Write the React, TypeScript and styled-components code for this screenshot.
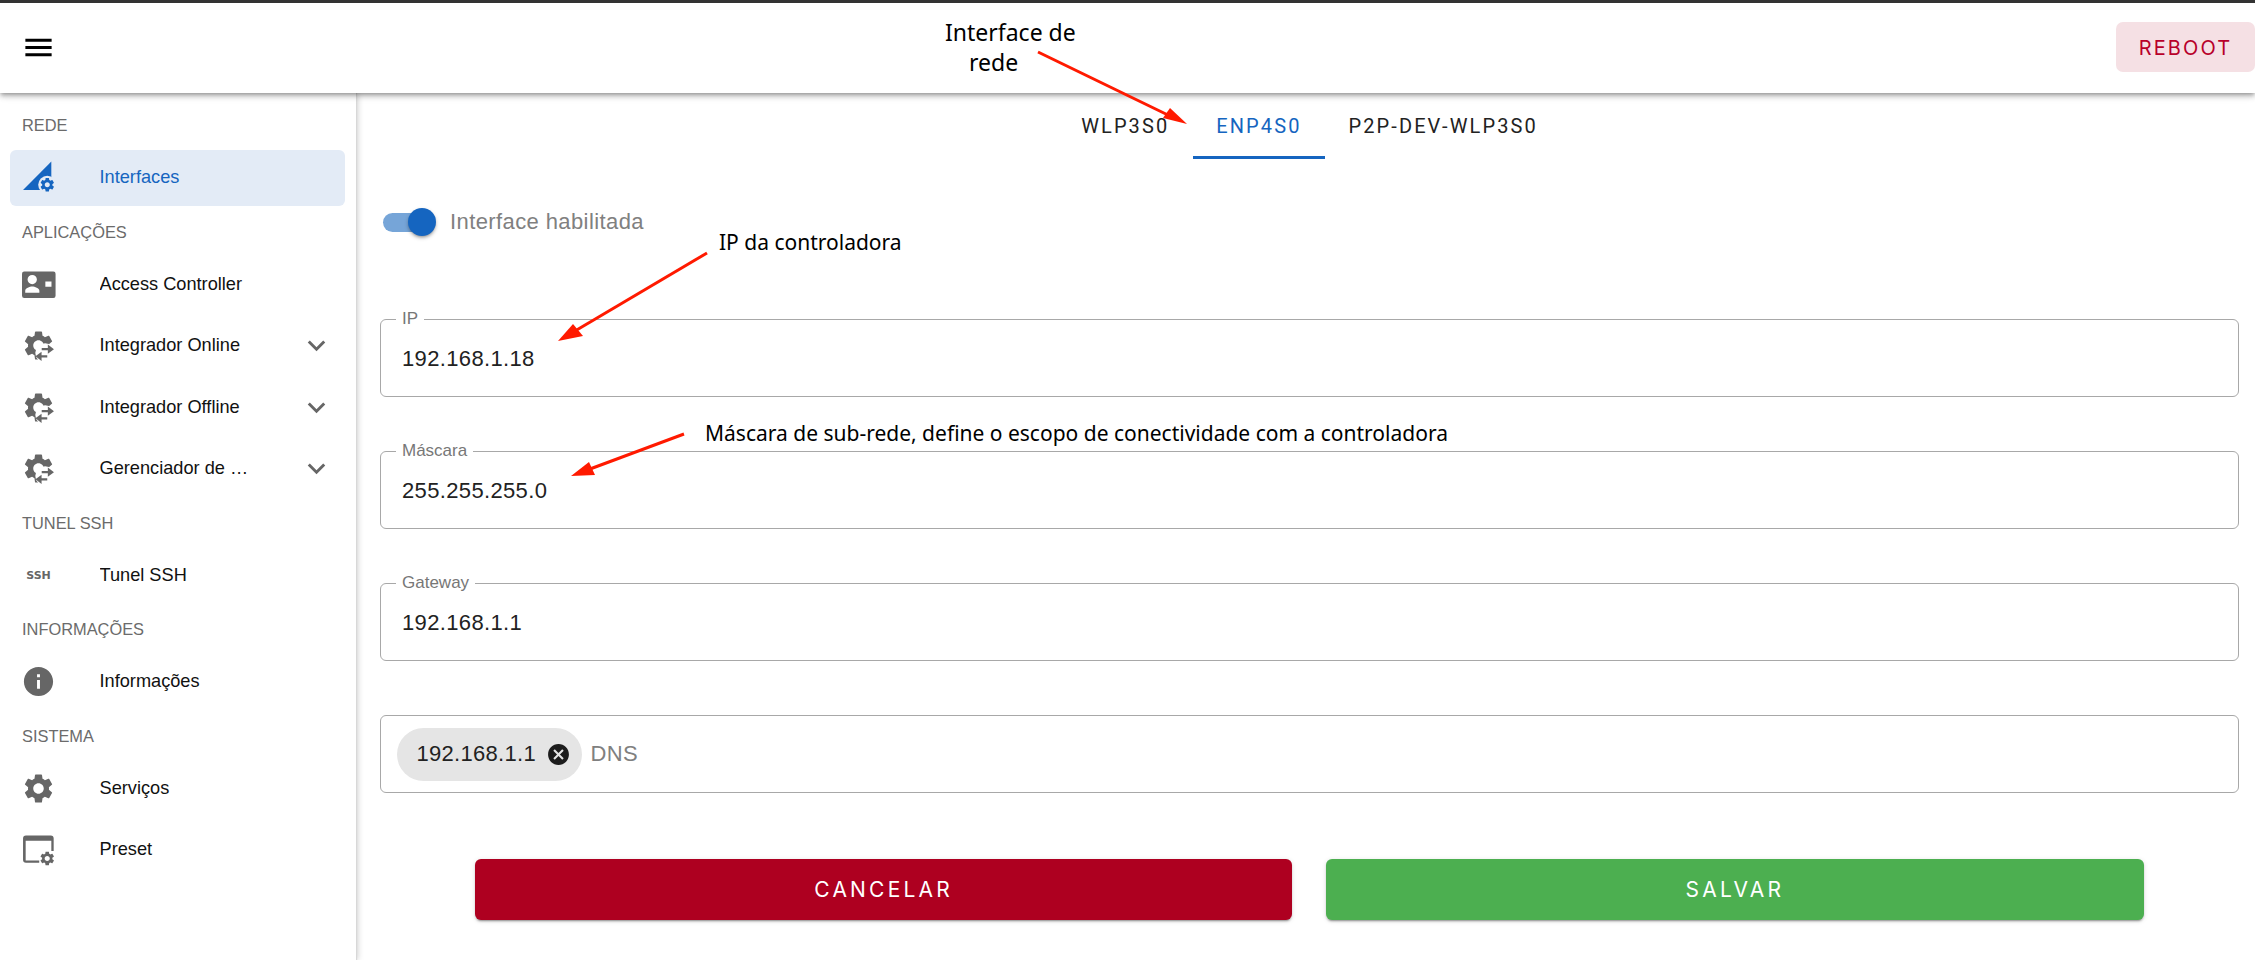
import styled, { createGlobalStyle } from "styled-components"

const GEAR = "M19.14 12.94c.04-.3.06-.61.06-.94 0-.32-.02-.64-.07-.94l2.03-1.58c.18-.14.23-.41.12-.61l-1.92-3.32c-.12-.22-.37-.29-.59-.22l-2.39.96c-.5-.38-1.03-.7-1.62-.94l-.36-2.54c-.04-.24-.24-.41-.48-.41h-3.84c-.24 0-.43.17-.47.41l-.36 2.54c-.59.24-1.13.57-1.62.94l-2.39-.96c-.22-.08-.47 0-.59.22L2.74 8.87c-.12.21-.08.47.12.61l2.03 1.58c-.05.3-.09.63-.09.94s.02.64.07.94l-2.03 1.58c-.18.14-.23.41-.12.61l1.92 3.32c.12.22.37.29.59.22l2.39-.96c.5.38 1.03.7 1.62.94l.36 2.54c.05.24.24.41.48.41h3.84c.24 0 .44-.17.47-.41l.36-2.54c.59-.24 1.13-.56 1.62-.94l2.39.96c.22.08.47 0 .59-.22l1.92-3.32c.12-.22.07-.47-.12-.61l-2.01-1.58zM12 15.6c-1.98 0-3.6-1.62-3.6-3.6s1.62-3.6 3.6-3.6 3.6 1.62 3.6 3.6-1.62 3.6-3.6 3.6z"

const MenuIcon = () => (
  <svg width="35" height="35" viewBox="0 0 24 24" fill="#000">
    <path d="M3 18h18v-2H3v2zm0-5h18v-2H3v2zm0-7v2h18V6H3z" />
  </svg>
)

const InterfacesIcon = () => (
  <svg width="35" height="35" viewBox="0 0 24 24" fill="#1565c0">
    <path d="M1.4 20.5 20.8 1v19.5z" />
    <circle cx="18" cy="17" r="6.2" fill="#e3ebf6" />
    <path d={GEAR} transform="translate(12.2 11.2) scale(.485)" />
  </svg>
)

const AccessIcon = () => (
  <svg width="35" height="35" viewBox="0 0 24 24" fill="#666">
    <path
      fillRule="evenodd"
      d="M2.2 3.1h20a1.5 1.5 0 0 1 1.5 1.5v15.1a1.5 1.5 0 0 1-1.5 1.5h-20a1.5 1.5 0 0 1-1.5-1.5V4.6a1.5 1.5 0 0 1 1.5-1.5zM7.7 5.4a3.2 3.2 0 1 0 0 6.4 3.2 3.2 0 0 0 0-6.4zM2.9 17.6h9.7v-1.4c0-1.8-3.2-2.9-4.9-2.9s-4.8 1.1-4.8 2.9zM16.7 10v3.6h4.2V10z"
    />
  </svg>
)

const SyncGearIcon = () => (
  <svg width="35" height="35" viewBox="0 0 24 24" fill="#666">
    <path d={GEAR} />
    <circle cx="16.6" cy="17.2" r="6.8" fill="#fff" />
    <path d="M14.2 13.7h4.2v-2.4l4.2 3.2-4.2 3.2v-2.4h-4.2z" />
    <path d="M18 18.6h-3.9v-2.4l-4.2 3.2 4.2 3.2v-2.4H18z" />
  </svg>
)

const InfoIcon = () => (
  <svg width="35" height="35" viewBox="0 0 24 24" fill="#666">
    <path d="M12 2C6.48 2 2 6.48 2 12s4.48 10 10 10 10-4.48 10-10S17.52 2 12 2zm1 15h-2v-6h2v6zm0-8h-2V7h2v2z" />
  </svg>
)

const GearIcon = () => (
  <svg width="35" height="35" viewBox="0 0 24 24" fill="#666">
    <path d={GEAR} />
  </svg>
)

const PresetIcon = () => (
  <svg width="35" height="35" viewBox="0 0 24 24" fill="#666">
    <path d="M3.4 2.4h17a2 2 0 0 1 2 2v8.6h-1.6V6H3.2v13.5h9.3v1.6H3.4a2 2 0 0 1-2-2V4.4a2 2 0 0 1 2-2z" />
    <path d={GEAR} transform="translate(12.1 12.3) scale(.49)" />
  </svg>
)

const ChevronIcon = () => (
  <svg width="35" height="35" viewBox="0 0 24 24" fill="#666">
    <path d="M16.59 8.59 12 13.17 7.41 8.59 6 10l6 6 6-6z" />
  </svg>
)

const ChipCloseIcon = () => (
  <svg width="25" height="25" viewBox="0 0 24 24" fill="#1c1c1c">
    <path d="M12 2C6.47 2 2 6.47 2 12s4.47 10 10 10 10-4.47 10-10S17.53 2 12 2zm5 13.59L15.59 17 12 13.41 8.41 17 7 15.59 10.59 12 7 8.41 8.41 7 12 10.59 15.59 7 17 8.41 13.41 12 17 15.59z" />
  </svg>
)

const App = () => {
  return (
    <Page>
      <GlobalStyle />

      <TopBar>
        <MenuButton><MenuIcon /></MenuButton>
        <RebootButton>REBOOT</RebootButton>
      </TopBar>

      <Body>
        <Sidebar>
          <SectionTitle>REDE</SectionTitle>
          <NavRow $active><NavIcon><InterfacesIcon /></NavIcon><NavLabel>Interfaces</NavLabel></NavRow>

          <SectionTitle>APLICAÇÕES</SectionTitle>
          <NavRow><NavIcon><AccessIcon /></NavIcon><NavLabel>Access Controller</NavLabel></NavRow>
          <NavRow><NavIcon><SyncGearIcon /></NavIcon><NavLabel>Integrador Online</NavLabel><ChevronIcon /></NavRow>
          <NavRow><NavIcon><SyncGearIcon /></NavIcon><NavLabel>Integrador Offline</NavLabel><ChevronIcon /></NavRow>
          <NavRow><NavIcon><SyncGearIcon /></NavIcon><NavLabel>Gerenciador de Serviços</NavLabel><ChevronIcon /></NavRow>

          <SectionTitle>TUNEL SSH</SectionTitle>
          <NavRow><NavIcon><SshGlyph>SSH</SshGlyph></NavIcon><NavLabel>Tunel SSH</NavLabel></NavRow>

          <SectionTitle>INFORMAÇÕES</SectionTitle>
          <NavRow><NavIcon><InfoIcon /></NavIcon><NavLabel>Informações</NavLabel></NavRow>

          <SectionTitle>SISTEMA</SectionTitle>
          <NavRow><NavIcon><GearIcon /></NavIcon><NavLabel>Serviços</NavLabel></NavRow>
          <NavRow><NavIcon><PresetIcon /></NavIcon><NavLabel>Preset</NavLabel></NavRow>
        </Sidebar>

        <Main>
          <Tabs>
            <Tab>WLP3S0</Tab>
            <Tab $active>ENP4S0</Tab>
            <Tab>P2P-DEV-WLP3S0</Tab>
          </Tabs>

          <SwitchRow>
            <SwitchTrack><SwitchThumb /></SwitchTrack>
            <SwitchLabel>Interface habilitada</SwitchLabel>
          </SwitchRow>

          <Fields>
            <Field><FieldLabel>IP</FieldLabel><FieldValue>192.168.1.18</FieldValue></Field>
            <Field><FieldLabel>Máscara</FieldLabel><FieldValue>255.255.255.0</FieldValue></Field>
            <Field><FieldLabel>Gateway</FieldLabel><FieldValue>192.168.1.1</FieldValue></Field>
            <ChipField>
              <Chip>192.168.1.1<ChipCloseIcon /></Chip>
              <Placeholder>DNS</Placeholder>
            </ChipField>
          </Fields>

          <Actions>
            <ActionButton $color="#ae0020">CANCELAR</ActionButton>
            <ActionButton $color="#4caf50">SALVAR</ActionButton>
          </Actions>
        </Main>
      </Body>

      <ArrowLayer width="2255" height="960" viewBox="0 0 2255 960">
        <g stroke="#ff1a00" strokeWidth="3" fill="#ff1a00">
          <line x1="1038" y1="52" x2="1170" y2="116" />
          <line x1="707" y1="253" x2="575" y2="331" />
          <line x1="684" y1="434" x2="590" y2="469" />
        </g>
        <g fill="#ff1a00">
          <polygon points="1187,124 1163,118 1170,108" />
          <polygon points="558,341 573,324 583,336" />
          <polygon points="571,476 589,462 595,475" />
        </g>
      </ArrowLayer>

      <Note $left={945} $top={17} $size={23}>Interface de<NoteIndent>rede</NoteIndent></Note>
      <Note $left={719} $top={227} $size={21}>IP da controladora</Note>
      <Note $left={705} $top={418} $size={21}>Máscara de sub-rede, define o escopo de conectividade com a controladora</Note>
    </Page>
  )
}

const GlobalStyle = createGlobalStyle`
  html, body {
    margin: 0;
    padding: 0;
    background: #fff;
  }
`

const Page = styled.div`
  position: relative;
  width: 2255px;
  height: 960px;
  overflow: hidden;
  display: flex;
  flex-direction: column;
  font-family: "Liberation Sans", Arial, sans-serif;
  color: #1f1f1f;
`

const TopBar = styled.header`
  position: relative;
  z-index: 2;
  height: 90px;
  flex-shrink: 0;
  border-top: 3px solid #333;
  background: #fff;
  display: flex;
  align-items: center;
  justify-content: space-between;
  box-shadow: 0 2px 4px -1px rgba(0, 0, 0, 0.3), 0 4px 5px rgba(0, 0, 0, 0.14), 0 1px 10px rgba(0, 0, 0, 0.12);
`

const MenuButton = styled.div`
  display: flex;
  padding: 0 0 2px 21px;
`

const RebootButton = styled.div`
  width: 139px;
  height: 50px;
  box-sizing: border-box;
  margin-bottom: 2px;
  padding-top: 1px;
  border-radius: 7px;
  background: #f5e0e4;
  color: #b8002a;
  font-family: Inter, sans-serif;
  font-size: 20px;
  letter-spacing: 2.1px;
  display: flex;
  align-items: center;
  justify-content: center;
`

const Body = styled.div`
  flex: 1;
  display: flex;
  min-height: 0;
`

const Sidebar = styled.nav`
  position: relative;
  z-index: 1;
  width: 356px;
  flex-shrink: 0;
  box-sizing: border-box;
  padding-top: 8.5px;
  display: flex;
  flex-direction: column;
  background: #fff;
  box-shadow: 1px 0 1px #d8d8d8, 2px 0 6px rgba(0, 0, 0, 0.18);
`

const SectionTitle = styled.div`
  height: 45px;
  flex-shrink: 0;
  box-sizing: border-box;
  padding: 3px 0 0 22px;
  display: flex;
  align-items: center;
  font-size: 16.4px;
  color: #6b6b6b;
`

const NavRow = styled.div<{ $active?: boolean }>`
  height: 56px;
  flex-shrink: 0;
  margin: 3px 11px 2.5px 10px;
  padding: 0 11px;
  border-radius: 6px;
  display: flex;
  align-items: center;
  font-size: 18.2px;
  color: ${(p) => (p.$active ? "#1565c0" : "#111")};
  background: ${(p) => (p.$active ? "#e3ebf6" : "transparent")};
`

const NavIcon = styled.span`
  width: 35px;
  height: 35px;
  margin-right: 43.5px;
  flex-shrink: 0;
  display: flex;
  align-items: center;
  justify-content: center;
`

const NavLabel = styled.span`
  flex: 1;
  min-width: 0;
  padding-right: 45px;
  white-space: nowrap;
  overflow: hidden;
  text-overflow: ellipsis;
`

const SshGlyph = styled.span`
  font-family: "DejaVu Sans", sans-serif;
  font-size: 11px;
  font-weight: 700;
  color: #666;
`

const Main = styled.main`
  flex: 1;
  min-width: 0;
  padding: 0 16px 0 24px;
`

const Tabs = styled.div`
  height: 66px;
  display: flex;
  justify-content: center;
`

const Tab = styled.div<{ $active?: boolean }>`
  box-sizing: border-box;
  padding: 2px 23.5px 0;
  display: flex;
  align-items: center;
  font-family: Roboto, sans-serif;
  font-size: 20px;
  letter-spacing: 2.1px;
  color: ${(p) => (p.$active ? "#1565c0" : "#222")};
  border-bottom: 3px solid ${(p) => (p.$active ? "#1565c0" : "transparent")};
`

const SwitchRow = styled.div`
  margin-top: 49px;
  height: 28px;
  padding-left: 3px;
  display: flex;
  align-items: center;
`

const SwitchTrack = styled.div`
  position: relative;
  width: 47px;
  height: 19px;
  border-radius: 10px;
  background: #76a5d8;
`

const SwitchThumb = styled.div`
  position: absolute;
  right: -6px;
  top: -4.5px;
  width: 28px;
  height: 28px;
  border-radius: 50%;
  background: #1565c0;
  box-shadow: 0 2px 3px -1px rgba(0, 0, 0, 0.3), 0 2px 4px rgba(0, 0, 0, 0.2);
`

const SwitchLabel = styled.span`
  margin-left: 20px;
  font-size: 22px;
  letter-spacing: 0.4px;
  color: #808080;
`

const Fields = styled.div`
  margin-top: 83px;
  display: flex;
  flex-direction: column;
  gap: 54px;
`

const Field = styled.div`
  position: relative;
  height: 78px;
  box-sizing: border-box;
  padding: 2px 0 0 21px;
  border: 1px solid #a8a8a8;
  border-radius: 6px;
  display: flex;
  align-items: center;
`

const ChipField = styled(Field)`
  padding: 0 0 0 16px;
`

const FieldLabel = styled.span`
  position: absolute;
  left: 15px;
  top: -11px;
  padding: 0 6px;
  background: #fff;
  font-size: 17px;
  line-height: 20px;
  color: #777;
`

const FieldValue = styled.span`
  font-size: 22px;
  letter-spacing: 0.35px;
  color: #222;
`

const Chip = styled.span`
  height: 53px;
  box-sizing: border-box;
  padding: 0 11px 0 19.5px;
  border-radius: 27px;
  background: #e5e5e5;
  display: flex;
  align-items: center;
  gap: 9.5px;
  font-size: 22px;
  letter-spacing: 0.3px;
  color: #222;
`

const Placeholder = styled.span`
  margin-left: 9px;
  font-size: 22px;
  letter-spacing: 0.3px;
  color: #808080;
`

const Actions = styled.div`
  margin-top: 66px;
  padding: 0 95.5px 0 95px;
  display: flex;
  gap: 34px;
`

const ActionButton = styled.div<{ $color: string }>`
  flex: 1;
  height: 61px;
  border-radius: 6px;
  background: ${(p) => p.$color};
  color: #fff;
  font-family: Inter, sans-serif;
  font-size: 21px;
  letter-spacing: 3.2px;
  display: flex;
  align-items: center;
  justify-content: center;
  box-shadow: 0 3px 1px -2px rgba(0, 0, 0, 0.2), 0 2px 2px rgba(0, 0, 0, 0.14), 0 1px 5px rgba(0, 0, 0, 0.12);
`

const ArrowLayer = styled.svg`
  position: absolute;
  left: 0;
  top: 0;
  z-index: 3;
  pointer-events: none;
`

const Note = styled.div<{ $left: number; $top: number; $size: number }>`
  position: absolute;
  z-index: 3;
  left: ${(p) => p.$left}px;
  top: ${(p) => p.$top}px;
  font-family: "Noto Sans", sans-serif;
  font-size: ${(p) => p.$size}px;
  line-height: 30px;
  color: #000;
  white-space: nowrap;
`

const NoteIndent = styled.div`
  margin-left: 24px;
`

export default App
